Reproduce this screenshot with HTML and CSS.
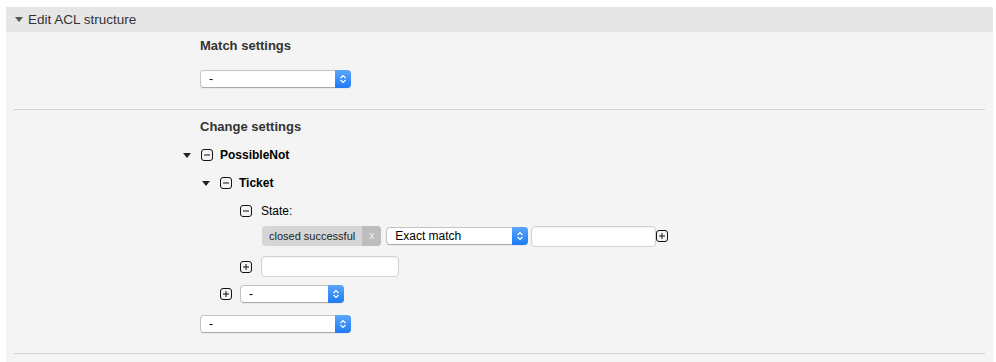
FILE: index.html
```html
<html>
  <head>
    <meta charset="UTF-8" />
    <link rel="stylesheet" href="styles.css">
  </head>
  <body>
    <div class="panel">
      <div class="panelHeader">
        <span class="toggle"></span>Edit ACL structure
      </div>
      <div class="panelBody">
        <div class="section first">
          <div class="sectionTitle">Match settings</div>
          <div class="select wide"><span class="value">-</span><span class="arrows"><svg width="8" height="10" viewBox="0 0 8 10"><path d="M1.5 4 L4 1.5 L6.5 4 M1.5 6 L4 8.5 L6.5 6" fill="none" stroke="#fff" stroke-width="1.2"/></svg></span></div>
        </div>
        <div class="section">
          <div class="sectionTitle">Change settings</div>
          <div class="treeRow lvl1">
            <span class="toggle"></span>
            <svg class="box" width="12" height="12" viewBox="0 0 12 12"><rect x="0.5" y="0.5" width="11" height="11" rx="2.5" fill="none" stroke="#111"/><path d="M3 6 H9" stroke="#111"/></svg>
            <b>PossibleNot</b>
          </div>
          <div class="treeRow lvl2">
            <span class="toggle"></span>
            <svg class="box" width="12" height="12" viewBox="0 0 12 12"><rect x="0.5" y="0.5" width="11" height="11" rx="2.5" fill="none" stroke="#111"/><path d="M3 6 H9" stroke="#111"/></svg>
            <b>Ticket</b>
          </div>
          <div class="treeRow lvl3 state">
            <svg class="box" width="12" height="12" viewBox="0 0 12 12"><rect x="0.5" y="0.5" width="11" height="11" rx="2.5" fill="none" stroke="#111"/><path d="M3 6 H9" stroke="#111"/></svg>
            <span>State:</span>
          </div>
          <div class="valueRow">
            <span class="tag"><span class="tagText">closed successful</span><span class="tagRemove">x</span></span>
            <div class="select match"><span class="value">Exact match</span><span class="arrows"><svg width="8" height="10" viewBox="0 0 8 10"><path d="M1.5 4 L4 1.5 L6.5 4 M1.5 6 L4 8.5 L6.5 6" fill="none" stroke="#fff" stroke-width="1.2"/></svg></span></div>
            <div class="input short"></div>
            <svg class="box" width="12" height="12" viewBox="0 0 12 12"><rect x="0.5" y="0.5" width="11" height="11" rx="2.5" fill="none" stroke="#111"/><path d="M3 6 H9 M6 3 V9" stroke="#111"/></svg>
          </div>
          <div class="addRow lvl3">
            <svg class="box" width="12" height="12" viewBox="0 0 12 12"><rect x="0.5" y="0.5" width="11" height="11" rx="2.5" fill="none" stroke="#111"/><path d="M3 6 H9 M6 3 V9" stroke="#111"/></svg>
            <div class="input"></div>
          </div>
          <div class="addRow lvl2 selRow">
            <svg class="box" width="12" height="12" viewBox="0 0 12 12"><rect x="0.5" y="0.5" width="11" height="11" rx="2.5" fill="none" stroke="#111"/><path d="M3 6 H9 M6 3 V9" stroke="#111"/></svg>
            <div class="select small"><span class="value">-</span><span class="arrows"><svg width="8" height="10" viewBox="0 0 8 10"><path d="M1.5 4 L4 1.5 L6.5 4 M1.5 6 L4 8.5 L6.5 6" fill="none" stroke="#fff" stroke-width="1.2"/></svg></span></div>
          </div>
          <div class="lastRow">
            <div class="select wide"><span class="value">-</span><span class="arrows"><svg width="8" height="10" viewBox="0 0 8 10"><path d="M1.5 4 L4 1.5 L6.5 4 M1.5 6 L4 8.5 L6.5 6" fill="none" stroke="#fff" stroke-width="1.2"/></svg></span></div>
          </div>
        </div>
      </div>
    </div>
  </body>
</html>
```
FILE: styles.css
```css
body {
  margin: 0;
  background: #fff;
  font-family: 'Liberation Sans', Arial, Helvetica, sans-serif;
  font-size: 12px;
  color: #000;
}
.panel {
  margin: 7px 3px 0 6px;
  background: #f4f4f4;
  height: 355px;
}
.panelHeader {
  height: 25px;
  background: #e6e6e6;
  display: flex;
  align-items: center;
  padding-left: 9px;
  color: #333;
  font-size: 13.5px;
}
.toggle {
  display: inline-block;
  width: 0;
  height: 0;
  border-left: 4px solid transparent;
  border-right: 4px solid transparent;
  border-top: 5px solid #222;
  margin-right: 5px;
}
.panelHeader .toggle {
  border-top-color: #555;
}
.section {
  margin: 0 8px;
  padding-left: 186px;
  border-bottom: 1px solid #d2d2d2;
}
.section.first {
  padding-top: 6px;
  padding-bottom: 21px;
}
.sectionTitle {
  font-weight: bold;
  font-size: 13px;
  color: #333;
  line-height: 16px;
}
.first .sectionTitle {
  margin-bottom: 16px;
}
.section + .section {
  padding-top: 9px;
  padding-bottom: 20px;
}
.select {
  display: flex;
  align-items: stretch;
  height: 16px;
  background: #fff;
  border: 1px solid #c4c4c4;
  border-bottom-color: #aaa;
  border-radius: 4px;
  box-shadow: 0 1px 0 rgba(0, 0, 0, 0.04);
  font-size: 12px;
}
.select .value {
  flex: 1;
  padding-left: 8px;
  line-height: 16px;
}
.select .arrows {
  width: 16px;
  margin: -1px -1px -1px 0;
  border-radius: 0 4px 4px 0;
  background: linear-gradient(#5aa6fb, #1f7af5);
  display: flex;
  align-items: center;
  justify-content: center;
}
.select.wide {
  width: 149px;
}
.select.small {
  width: 102px;
}
.select.match {
  width: 140px;
}
.treeRow {
  display: flex;
  align-items: center;
  height: 28px;
}
.treeRow b {
  font-size: 12px;
}
.box {
  display: block;
  flex: none;
}
.treeRow .toggle {
  margin-right: 10px;
}
.treeRow .box {
  margin-right: 7px;
}
.lvl1 {
  margin-left: -17px;
}
.treeRow.lvl1 {
  margin-top: 6px;
}
.lvl2 {
  margin-left: 2px;
}
.addRow.lvl2 {
  margin-left: 20px;
}
.lvl3 {
  margin-left: 40px;
}
.treeRow.state .box {
  margin-right: 9px;
}
.valueRow {
  display: flex;
  align-items: center;
  margin-left: 62px;
  height: 22px;
}
.tag {
  display: flex;
  height: 20px;
  border-radius: 4px;
  background: #d5d5d5;
  overflow: hidden;
  margin-right: 5px;
}
.tagText {
  padding: 0 7px;
  line-height: 20px;
  color: #222;
  font-size: 11px;
}
.tagRemove {
  width: 19px;
  background: #bdbdbd;
  color: #eee;
  text-align: center;
  line-height: 19px;
  font-size: 11px;
}
.valueRow .select {
  margin-right: 3px;
}
.input {
  height: 19px;
  background: #fff;
  border: 1px solid #d2d2d2;
  border-radius: 4px;
  box-shadow: inset 0 1px 2px rgba(0, 0, 0, 0.06);
}
.input.short {
  width: 123px;
}
.addRow {
  display: flex;
  align-items: center;
  margin-top: 9px;
}
.addRow .input {
  width: 136px;
  margin-left: 9px;
}
.selRow {
  margin-top: 8px;
}
.selRow .select {
  margin-left: 8px;
}
.lastRow {
  margin-top: 12px;
}
```
